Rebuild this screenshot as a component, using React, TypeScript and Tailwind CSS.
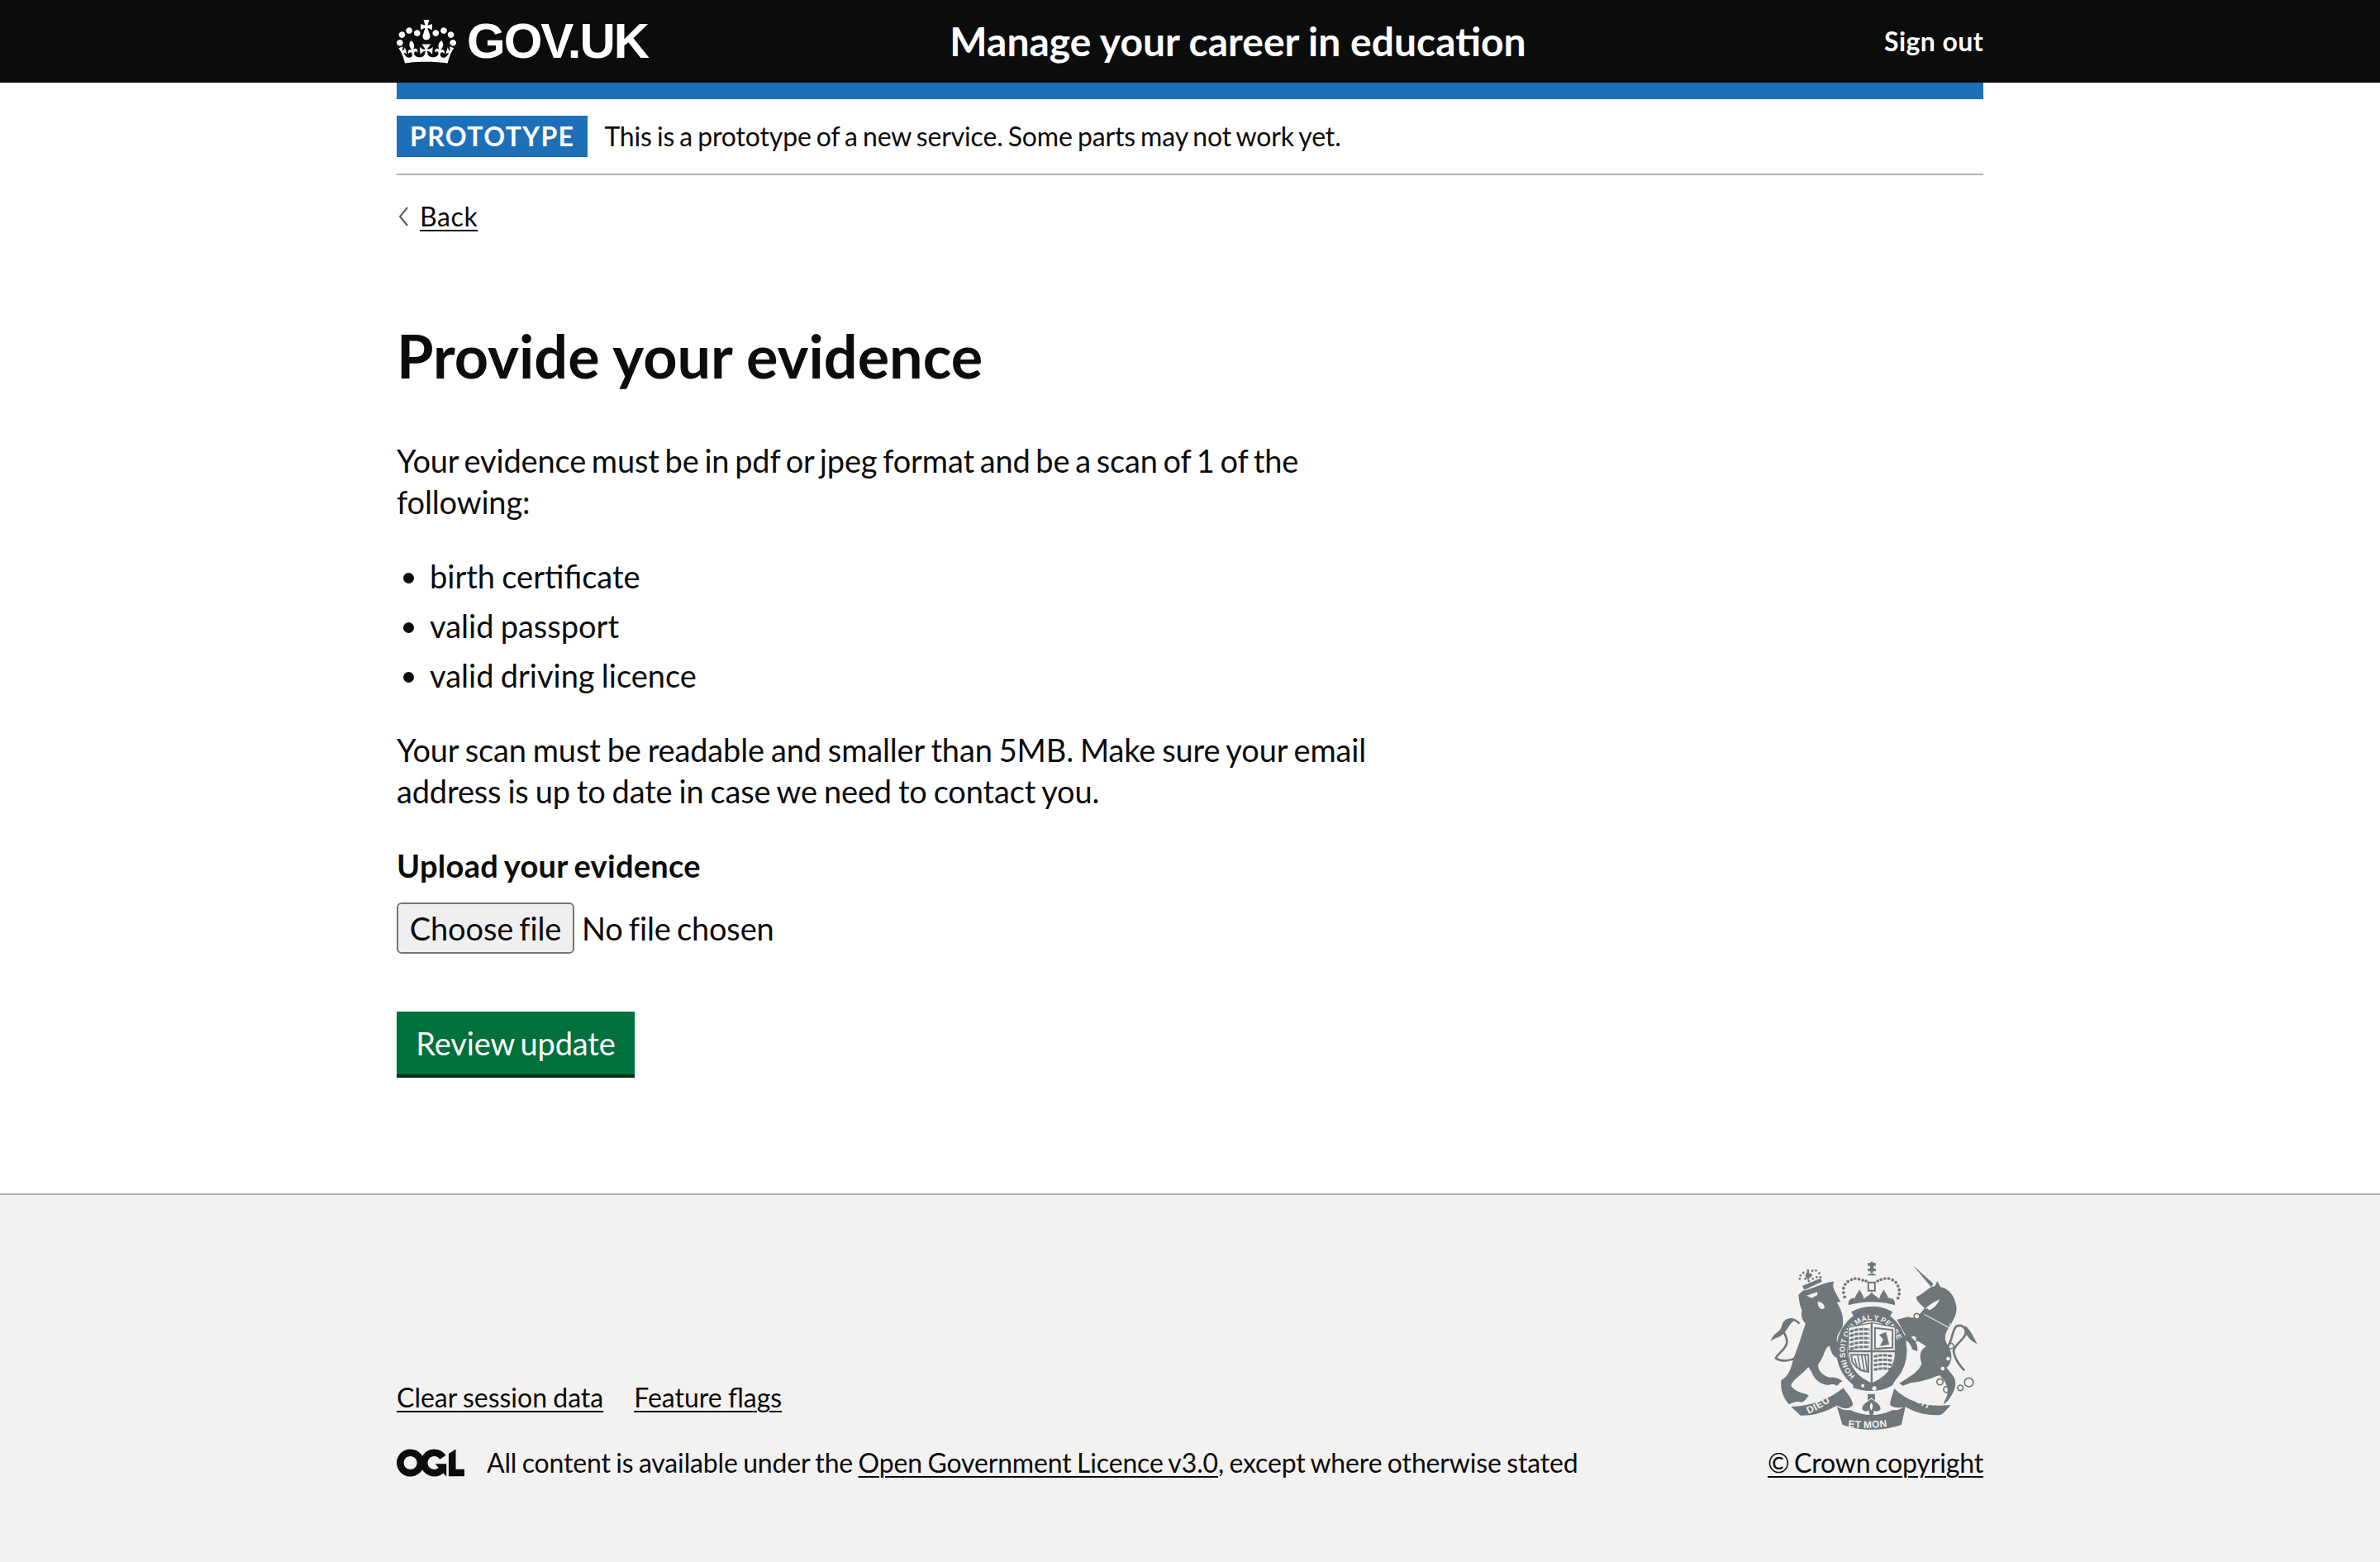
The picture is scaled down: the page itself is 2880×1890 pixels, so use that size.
const font = "font-['Lato','Liberation_Sans',sans-serif]";

function Crown() {
  return (
    <svg viewBox="0 0 132 97" className="w-[72px] h-[53px] fill-white shrink-0">
      <path fillRule="evenodd" d="M25 30.2c3.5 1.5 7.7-.2 9.1-3.7 1.5-3.6-.2-7.8-3.9-9.2-3.6-1.4-7.6.3-9.1 3.9-1.4 3.5.3 7.5 3.9 9zM9 39.5c3.6 1.5 7.8-.2 9.2-3.7 1.5-3.6-.2-7.8-3.9-9.1-3.6-1.5-7.6.2-9.1 3.8-1.4 3.5.3 7.5 3.8 9zM4.4 57.2c3.5 1.5 7.7-.2 9.1-3.8 1.5-3.6-.2-7.7-3.9-9.1-3.5-1.5-7.6.3-9.1 3.8-1.4 3.5.3 7.6 3.9 9.1zm38.3-21.4c3.5 1.5 7.7-.2 9.1-3.8 1.5-3.6-.2-7.7-3.9-9.1-3.6-1.5-7.6.3-9.1 3.8-1.3 3.6.4 7.7 3.9 9.1zm64.4-5.6c-3.6 1.5-7.8-.2-9.1-3.7-1.5-3.6.2-7.8 3.8-9.2 3.6-1.4 7.7.3 9.2 3.9 1.3 3.5-.4 7.5-3.9 9zm15.9 9.3c-3.6 1.5-7.7-.2-9.1-3.7-1.5-3.6.2-7.8 3.7-9.1 3.6-1.5 7.7.2 9.2 3.8 1.5 3.5-.3 7.5-3.8 9zm4.7 17.7c-3.6 1.5-7.8-.2-9.2-3.8-1.5-3.6.2-7.7 3.9-9.1 3.6-1.5 7.7.3 9.2 3.8 1.3 3.5-.4 7.6-3.9 9.1zM89.3 35.8c-3.6 1.5-7.8-.2-9.2-3.8-1.4-3.6.2-7.7 3.9-9.1 3.6-1.5 7.7.3 9.2 3.8 1.4 3.6-.3 7.7-3.9 9.1zM69.7 17.7l8.9 4.7V9.3l-8.9 2.8c-.2-.3-.5-.6-.9-.9L72.4 0H59.6l3.5 11.2c-.3.3-.6.5-.9.9l-8.8-2.8v13.1l8.8-4.7c.3.3.6.7.9.9l-5 15.4v.1c-.2.8-.4 1.6-.4 2.4 0 4.1 3.1 7.5 7 8.1h.2c.3 0 .7.1 1 .1.4 0 .7 0 1-.1h.2c4-.6 7.1-4.1 7.1-8.1 0-.8-.1-1.7-.4-2.4V34l-5.1-15.4c.4-.2.7-.6 1-.9zM66 92.8c16.9 0 32.8 1.1 47.1 3.2 4-16.9 8.9-26.7 14-33.5l-9.6-3.4c1 4.9 1.1 7.2 0 10.2-1.5-1.4-3-4.3-4.2-8.7L108.6 76c2.8-2 5-3.2 7.5-3.3-4.4 9.4-10 11.9-13.6 11.2-4.3-.8-6.3-4.6-5.6-7.9 1-4.7 5.7-5.9 8-.5 4.3-8.7-3-11.4-7.6-8.8 7.1-7.2 7.9-13.5 2.1-21.1-8 6.1-8.1 12.3-4.5 20.8-4.7-5.4-12.1-2.5-9.5 6.2 3.4-5.2 7.9-2 7.2 3.1-.6 4.3-6.4 7.8-13.5 7.2-10.3-.9-10.9-8-11.2-13.8 2.5-.5 7.1 1.8 11 7.3L80.2 60c-4.1 4.4-8 5.3-12.3 5.4 1.4-4.4 8-11.6 8-11.6H55.5s6.4 7.2 7.9 11.6c-4.2-.1-8-1-12.3-5.4l1.4 16.4c3.9-5.5 8.5-7.7 10.9-7.3-.3 5.8-.9 12.8-11.1 13.8-7.2.6-12.9-2.9-13.5-7.2-.7-5 3.8-8.3 7.1-3.1 2.7-8.7-4.6-11.6-9.4-6.2 3.7-8.5 3.6-14.7-4.6-20.8-5.8 7.6-5 13.9 2.2 21.1-4.7-2.6-11.9.1-7.7 8.8 2.3-5.5 7.1-4.2 8.1.5.7 3.3-1.3 7.1-5.7 7.9-3.5.7-9-1.8-13.5-11.2 2.5.1 4.7 1.3 7.5 3.3l-4.7-15.4c-1.2 4.4-2.7 7.2-4.3 8.7-1.1-3-.9-5.3 0-10.2l-9.5 3.4c5 6.9 9.9 16.7 14 33.5 14.8-2.1 30.8-3.2 47.7-3.2z" />
    </svg>
  );
}

function Ogl() {
  return (
    <svg viewBox="0 0 483.2 195.7" className="w-[82px] h-[34px] fill-[#0b0c0c] shrink-0">
      <path d="M421.5 142.8V.1l-50.7 32.3v161.1h112.4v-50.7zm-122.3-9.6A47.12 47.12 0 0 1 221 97.8c0-26 21.1-47.1 47.1-47.1 16.7 0 31.4 8.7 39.7 21.8l42.7-27.2A97.63 97.63 0 0 0 268.1 0c-36.5 0-68.3 20.1-85.1 49.7A98 98 0 0 0 97.8 0C43.9 0 0 43.9 0 97.8s43.9 97.8 97.8 97.8c36.5 0 68.3-20.1 85.1-49.7a97.76 97.76 0 0 0 149.6 25.4l19.4 22.2h3v-87.8h-80l24.3 27.5zM97.8 145c-26 0-47.1-21.1-47.1-47.1s21.1-47.1 47.1-47.1 47.2 21 47.2 47S123.8 145 97.8 145" />
    </svg>
  );
}

function Arms() {
  const c = "#6f777b";
  const bg = "#f3f2f1";
  const lbl = "'Liberation Sans',sans-serif";
  const dots = (pts: number[][], r = 7) => pts.map(([x, y], i) => <circle key={i} cx={x} cy={y} r={r} fill={c} />);
  return (
    <svg viewBox="130 75 755 618" className="w-[252px] h-[206px] shrink-0 mr-[6px]">
      <defs>
        <path id="garter" d="M442 498 A 98 114 0 1 1 556 498" />
        <path id="dieu" d="M268 632 Q 320 612 372 568" />
        <path id="droit" d="M612 552 Q 660 596 728 628" />
        <path id="etmon" d="M412 680 Q 495 690 582 674" />
      </defs>
      <path d="M236 305 C215 282 190 285 178 305 C165 335 195 345 190 375 C185 400 160 410 150 430 C170 445 205 440 232 425" fill="none" stroke={c} strokeWidth="8" />
      <path d="M132 368 C142 335 165 340 172 312 C185 290 205 285 222 292 C200 300 195 325 180 340 C165 355 150 355 132 368Z" fill={c} />
      <path d="M248 185 C290 178 330 150 362 152 C350 172 368 190 385 225 L372 228 C392 260 398 290 392 318 L375 345 C368 365 372 380 385 395 C398 405 392 425 378 432 C355 425 350 405 345 385 C325 395 325 430 305 450 C300 470 315 492 345 500 C365 498 385 505 392 515 C380 515 382 525 372 530 C360 522 350 525 340 528 C315 525 290 510 280 480 L268 462 C248 490 212 505 205 530 C222 555 250 555 270 565 C262 575 258 585 245 590 C225 585 215 590 198 598 C180 575 165 550 170 510 C200 495 205 465 215 430 C235 380 245 340 258 305 C245 290 240 275 245 255 C235 235 235 215 232 200Z" fill={c} />
      <path d="M262 203 L300 190 L302 200 L280 212Z" fill={bg} />
      <path d="M303 224 C318 226 330 238 326 250 C312 258 300 240 303 224Z" fill={bg} />
      <path d="M246 168 L312 140 L318 152 L254 182Z" fill={c} />
      <path d="M258 122 h5 v-14 h8 v14 h6 v-1 l6 8 l-6 8 h-6 v8 h-8 v-8 h-5z" fill={c} />
      {dots([[237,142],[240,130],[250,120],[283,113],[296,112],[308,122],[312,136],[257,142],[270,150],[285,142],[298,136]], 4.2)}
      <path d="M648 93 L722 160 L714 172Z" fill={c} />
      <path d="M714 172 L728 168 L736 150 L748 172 C780 178 800 205 806 245 C808 270 795 290 780 318 C760 340 762 365 775 385 C795 415 790 450 770 465 C790 490 805 500 802 530 C795 560 775 590 758 598 L772 565 C778 540 770 520 745 492 C720 500 690 515 640 520 L612 530 L598 522 C640 495 668 480 680 450 C670 425 672 400 696 388 C680 375 645 355 620 345 L590 290 L630 280 C655 290 672 275 690 248 C675 235 660 222 660 208 C680 200 695 185 714 172Z" fill={c} />
      <path d="M694 250 C710 232 730 225 745 215 C735 240 720 252 700 258Z" fill={bg} />
      <path d="M696 258 L785 304 L780 322 L688 272Z" fill={bg} />
      <path d="M690 262 L700 248 L708 258 L722 255 L726 268 L740 266 L744 280 L758 278 L762 292 L782 292 L780 318 L690 270Z" fill={c} />
      {[[662,278,10],[650,360,12],[786,386,10],[776,432,7],[756,468,7]].map(([x,y,r],i) => <circle key={i} cx={x} cy={y} r={r} fill={bg} stroke={i < 3 ? c : "none"} strokeWidth="5" />)}
      <path d="M620 345 C650 350 668 380 664 405 L645 398 C640 375 625 365 610 360Z" fill={c} />
      <path d="M775 385 C790 370 790 330 805 315 C825 305 845 320 838 345 C825 370 800 380 795 405 C800 430 815 455 835 475" fill="none" stroke={c} strokeWidth="8" />
      <path d="M838 312 C860 330 870 360 882 378 C860 372 850 355 838 340Z" fill={c} />
      {[[746,516,11],[770,544,11],[820,538,10],[851,518,16]].map(([x,y,r],i) => <circle key={i} cx={x} cy={y} r={r} fill="none" stroke={c} strokeWidth="5" />)}
      <path d="M484 85 h10 v-5 h9 v5 h10 v10 h-8 v10 h8 v10 h-10 v5 h-9 v-5 h-10 v-10 h8 v-10 h-8z" fill={c} />
      <path d="M494 122 h9 l14 8 h-37z" fill={c} />
      <path d="M486 155 h24 v30 h-24z" fill="none" stroke={c} strokeWidth="6" />
      {dots([[400,208],[396,192],[396,176],[402,162],[412,152],[425,145],[438,141],[452,143],[466,147],[478,150],[520,150],[532,145],[546,141],[560,141],[574,146],[586,155],[594,168],[598,182],[598,197],[594,212]], 5.6)}
      <path d="M414 236 C412 222 420 210 438 212 C440 200 448 195 454 180 C460 195 468 200 470 215 C480 205 488 205 498 190 C508 205 516 205 526 215 C528 200 536 195 542 180 C548 195 556 200 558 212 C575 210 586 222 582 238 C530 222 470 222 414 238Z" fill={c} />
      <path d="M424 262 C470 236 530 236 574 262 L564 280 C525 262 470 262 434 280Z" fill={c} />
      <ellipse cx="498" cy="402" rx="108" ry="126" fill="none" stroke={c} strokeWidth="40" />
      <text fill={bg} fontSize="27" fontWeight="700" fontFamily={lbl} letterSpacing="0.8">
        <textPath href="#garter" startOffset="1%">HONI SOIT QUI MAL Y PENSE</textPath>
      </text>
      <path d="M414 318 C445 312 470 308 498 302 C530 308 555 312 584 318 L584 410 C584 470 540 505 498 522 C456 505 414 470 414 410Z" fill={bg} stroke={c} strokeWidth="4" />
      <path d="M498 302 V522 M412 405 H586" stroke={c} strokeWidth="7" />
      {[330,346,362,378,394].map((y) => <path key={y} d={`M420 ${y+4} C440 ${y-6} 470 ${y-6} 490 ${y-4}`} stroke={c} strokeWidth="9" strokeDasharray="14 3" fill="none" />)}
      {[424,440,456,472].map((y) => <path key={y} d={`M506 ${y} C530 ${y-6} 555 ${y-6} 574 ${y}`} stroke={c} strokeWidth="9" strokeDasharray="14 3" fill="none" />)}
      <path d="M510 320 L574 328 L574 392 L510 396Z" fill="none" stroke={c} strokeWidth="6" />
      <path d="M525 345 L550 335 L562 380 L528 386 L540 362Z" fill={c} />
      <path d="M424 418 L486 418 L486 480 C465 480 440 465 428 445Z" fill={bg} stroke={c} strokeWidth="6" />
      <path d="M462 420 L472 480 M448 422 L458 476 M474 420 L482 476 M436 430 L446 466" stroke={c} strokeWidth="5" />
      <path d="M425 500 C470 530 540 535 592 496 L574 528 C530 556 470 553 432 538Z" fill={c} />
      <circle cx="508" cy="540" r="8" fill={bg} />
      <circle cx="466" cy="530" r="6" fill={bg} />
      <path d="M484 560 h26 v24 l-13 -10 l-13 10z" fill={c} />
      <path d="M497 578 C515 590 532 600 530 615 C525 625 510 625 505 618 C507 628 505 635 497 640 C489 635 487 628 489 618 C484 625 469 625 464 615 C462 600 479 590 497 578Z M497 592 C490 600 490 610 497 620 C504 610 504 600 497 592Z" fill={c} fillRule="evenodd" />
      <path d="M205 606 C275 605 345 580 395 538 C410 560 430 580 430 600 C410 620 395 612 372 602 C330 625 285 640 240 638 Z" fill={c} />
      <path d="M580 540 C630 590 700 610 785 600 C770 618 760 630 748 636 C690 640 640 620 620 605 C600 612 580 612 565 600 C565 580 575 560 580 540Z" fill={c} />
      <path d="M372 606 C385 612 395 622 420 618 C470 642 530 642 575 618 C590 622 605 615 622 600 L606 672 C540 695 450 695 392 672Z" fill={c} />
      <text fill={bg} fontSize="36" fontWeight="700" fontFamily={lbl} letterSpacing="2"><textPath href="#dieu">DIEU</textPath></text>
      <text fill={bg} fontSize="34" fontWeight="700" fontFamily={lbl} letterSpacing="2"><textPath href="#droit">DROIT</textPath></text>
      <text fill={bg} fontSize="36" fontWeight="700" fontFamily={lbl} letterSpacing="1"><textPath href="#etmon">ET MON</textPath></text>
    </svg>
  );
}

function A({ children, className = "" }: { children: React.ReactNode; className?: string }) {
  return <a href="#" className={`underline decoration-[2px] underline-offset-[4px] text-[#0b0c0c] ${className}`}>{children}</a>;
}

export default function App() {
  return (
    <div className={`${font} min-h-[1890px] bg-white text-[#0b0c0c] flex flex-col`}>
      <header className="h-[100px] bg-[#0b0c0c] text-white">
        <div className="w-[1920px] mx-auto h-full flex items-center justify-between">
          <div className="flex items-center gap-[13px] w-[600px]">
            <Crown />
            <span className="font-['Liberation_Sans',sans-serif] font-bold text-[60px] leading-none tracking-[-2px]">GOV.UK</span>
          </div>
          <div className="font-bold text-[48px] leading-none whitespace-nowrap relative left-[58px]">Manage your career in education</div>
          <div className="font-bold text-[32px] leading-none tracking-[0.4px] w-[600px] text-right">Sign out</div>
        </div>
      </header>
      <div className="w-[1920px] mx-auto flex-1">
        <div className="h-[20px] bg-[#1d70b8]" />
        <div className="pt-[20px] pb-[20px] border-b-2 border-[#b1b4b6] flex items-center gap-[20px]">
          <span className="bg-[#1d70b8] text-white font-bold text-[32px] leading-none tracking-[1.4px] h-[50px] px-[16px] flex items-center">PROTOTYPE</span>
          <span className="text-[32px] leading-[40px] tracking-[-0.15px] [word-spacing:-1.9px]">This is a prototype of a new service. Some parts may not work yet.</span>
        </div>
        <div className="mt-[30px] flex items-center h-[40px] text-[32px]">
          <svg viewBox="0 0 12 24" className="w-[16px] h-[24px] mr-[12px] fill-none stroke-[#505a5f] stroke-[2px]"><path d="M11 1 L2 12 L11 23" /></svg>
          <A className="tracking-[0.6px]">Back</A>
        </div>
        <h1 className="mt-[108px] font-bold text-[72px] leading-[80px]">Provide your evidence</h1>
        <div className="mt-[62px] w-[1240px] text-[38px] leading-[50px] tracking-[-0.15px]">
          <p className="[word-spacing:-2.8px]">Your evidence must be in pdf or jpeg format and be a scan of 1 of the following:</p>
          <ul className="mt-[40px] list-disc pl-[40px] flex flex-col gap-[10px] tracking-[0px] [word-spacing:-1.5px]">
            <li>birth certificate</li>
            <li>valid passport</li>
            <li>valid driving licence</li>
          </ul>
          <p className="mt-[40px] [word-spacing:-1.6px]">Your scan must be readable and smaller than 5MB. Make sure your email address is up to date in case we need to contact you.</p>
          <div className="mt-[40px] font-bold tracking-[0.3px] [word-spacing:-2px]">Upload your evidence</div>
          <div className="mt-[20px] flex items-center gap-[9px] [word-spacing:-2.4px]">
            <button className="w-[215px] h-[62px] border-2 border-[#767676] rounded-[6px] bg-[#efefef] [word-spacing:-2.4px]">Choose file</button>
            <span>No file chosen</span>
          </div>
          <button className="mt-[70px] block w-[288px] h-[80px] bg-[#00703c] text-white border-b-4 border-[#002d18] [word-spacing:-2.4px]">Review update</button>
        </div>
      </div>
      <footer className="h-[446px] bg-[#f3f2f1] border-t-2 border-[#b1b4b6] text-[32px] leading-[40px] tracking-[-0.15px] [word-spacing:-1.6px]">
        <div className="w-[1920px] mx-auto h-full flex justify-between items-end pb-[100px]">
          <div>
            <div className="flex gap-[37px] tracking-[0px] [word-spacing:-1px]"><A>Clear session data</A><A>Feature flags</A></div>
            <div className="mt-[39px] flex items-center gap-[27px]">
              <Ogl />
              <span>All content is available under the <A>Open Government Licence v3.0</A>, except where otherwise stated</span>
            </div>
          </div>
          <div className="flex flex-col items-end [word-spacing:-2.4px]">
            <Arms />
            <A className="mt-[19px]">© Crown copyright</A>
          </div>
        </div>
      </footer>
    </div>
  );
}
